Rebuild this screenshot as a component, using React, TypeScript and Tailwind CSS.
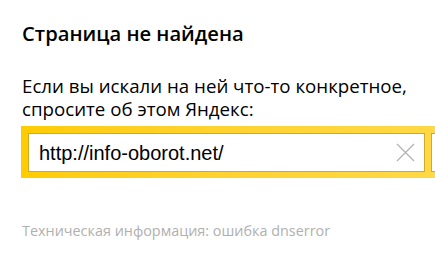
import React from "react";

export default function App() {
  return (
    <div className="w-[435px] h-[277px] bg-white overflow-hidden relative">
      <div className="pl-[22px] pt-[20px]">
        <h1 className="text-[20.2px] leading-[26px] font-semibold text-black [font-family:'Open_Sans',sans-serif]">
          Страница не найдена
        </h1>
        <p className="mt-[28px] text-[18.7px] leading-[23px] text-black [font-family:'Open_Sans',sans-serif]">
          Если вы искали на ней что-то конкретное,
          <br />
          спросите об этом Яндекс:
        </p>
      </div>
      <div className="ml-[21px] mt-[6px] w-[500px] h-[52px] bg-gradient-to-r from-[#ffcc00] to-[#ffdb4d] pl-[7px] pt-[7px] pb-[6px] flex">
        <div className="w-[397px] h-[39px] bg-white border border-[#cfa92c] flex items-center pl-[10px] pr-[9px]">
          <span className="flex-1 text-[20px] text-black [font-family:'Liberation_Sans',Arial,sans-serif]">
            http://info-oborot.net/
          </span>
          <svg width="19" height="19" viewBox="0 0 19 19" className="shrink-0">
            <path d="M1 1L18 18M18 1L1 18" stroke="#b3b3b3" strokeWidth="1.3" />
          </svg>
        </div>
        <div className="ml-[6px] w-[60px] h-[39px] bg-white border border-[#cfa92c]" />
      </div>
      <p className="pl-[22px] mt-[44px] text-[14.4px] leading-[18px] text-[#b0b0b0] [font-family:'Open_Sans',sans-serif]">
        Техническая информация: ошибка dnserror
      </p>
    </div>
  );
}
